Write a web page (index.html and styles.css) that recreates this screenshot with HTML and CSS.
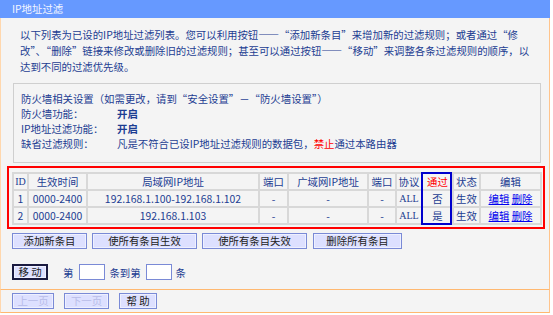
FILE: index.html
```html
<!DOCTYPE html>
<html lang="zh-CN">
<head>
    <meta charset="UTF-8">
    <title>IP地址过滤</title>
    <link rel="stylesheet" href="styles.css">
</head>
<body>

<div class="panel">
    <div class="title">IP地址过滤</div>

    <div class="content">
        <p class="intro">
            以下列表为已设的IP地址过滤列表。您可以利用按钮——“添加新条目”来增加新的过滤规则；或者通过“修<br>
            改”、“删除”链接来修改或删除旧的过滤规则；甚至可以通过按钮——“移动”来调整各条过滤规则的顺序，以<br>
            达到不同的过滤优先级。
        </p>

        <div class="setbox">
            <div>防火墙相关设置（如需更改，请到“安全设置”－“防火墙设置”）</div>
            <div><span class="key">防火墙功能：</span><b>开启</b></div>
            <div><span class="key">IP地址过滤功能：</span><b>开启</b></div>
            <div><span class="key">缺省过滤规则：</span>凡是不符合已设IP地址过滤规则的数据包，<span class="red">禁止</span>通过本路由器</div>
        </div>

        <div class="redbox">
            <div class="tablewrap">
                <table class="list">
                    <colgroup>
                        <col class="c-id">
                        <col class="c-time">
                        <col class="c-lan">
                        <col class="c-port">
                        <col class="c-wan">
                        <col class="c-port2">
                        <col class="c-proto">
                        <col class="c-pass">
                        <col class="c-state">
                        <col class="c-edit">
                    </colgroup>
                    <tr>
                        <th class="serif">ID</th>
                        <th>生效时间</th>
                        <th>局域网IP地址</th>
                        <th>端口</th>
                        <th>广域网IP地址</th>
                        <th>端口</th>
                        <th>协议</th>
                        <th class="red">通过</th>
                        <th>状态</th>
                        <th>编辑</th>
                    </tr>
                    <tr>
                        <td>1</td>
                        <td>0000-2400</td>
                        <td>192.168.1.100-192.168.1.102</td>
                        <td>-</td>
                        <td>-</td>
                        <td>-</td>
                        <td class="serif">ALL</td>
                        <td>否</td>
                        <td>生效</td>
                        <td><a href="javascript:;">编辑</a> <a href="javascript:;">删除</a></td>
                    </tr>
                    <tr>
                        <td>2</td>
                        <td>0000-2400</td>
                        <td>192.168.1.103</td>
                        <td>-</td>
                        <td>-</td>
                        <td>-</td>
                        <td class="serif">ALL</td>
                        <td>是</td>
                        <td>生效</td>
                        <td><a href="javascript:;">编辑</a> <a href="javascript:;">删除</a></td>
                    </tr>
                </table>
                <!--蓝框标出“通过”一列-->
                <div class="passmark"></div>
            </div>
        </div>

        <div class="btnrow">
            <button class="btn w75">添加新条目</button>
            <button class="btn w105">使所有条目生效</button>
            <button class="btn w105">使所有条目失效</button>
            <button class="btn w89">删除所有条目</button>
        </div>

        <div class="moverow">
            <button class="btn move">移 动</button>
            <span class="lbl first">第</span>
            <span class="inp"></span>
            <span class="lbl">条到第</span>
            <span class="inp"></span>
            <span class="lbl">条</span>
        </div>
    </div>

    <div class="foot">
        <button class="btn dis w42">上一页</button>
        <button class="btn dis w45">下一页</button>
        <button class="btn help">帮 助</button>
    </div>
</div>

</body>
</html>
```

FILE: styles.css
```css
*{
    margin: 0;
    padding: 0;
}

body{
    background-color: #ffffff;
    font-family: "Noto Sans CJK SC", "Liberation Sans", sans-serif;
    font-size: 10.4px;
    color: #1c3d92;
}

.panel{
    width: 550px;
}

.title{
    height: 18px;
    line-height: 18px;
    background-color: #6699ff;
    color: #f4f6ff;
    padding-left: 12px;
}

.content{
    background-color: #f4f4f4;
    border-left: 1px solid #ffd7ad;
    border-right: 1px solid #ffc48c;
    border-bottom: 1px solid #ffb870;
    padding-top: 9px;
    padding-bottom: 9px;
}

.intro{
    line-height: 16px;
    padding-left: 19px;
    white-space: nowrap;
}

/*防火墙设置框*/
.setbox{
    margin: 8px 0 0 12px;
    width: 509px;
    border: 1px solid #cfcfcf;
    padding: 7px 10px 11px 7px;
    line-height: 15px;
}

.key{
    display: inline-block;
    width: 96px;
}

.red{
    color: #ff0000;
}

/*红框*/
.redbox{
    margin: 3px 0 0 6px;
    width: 528px;
    border: 2px solid #ff0000;
    padding: 4px 3px 2px 3px;
}

.tablewrap{
    position: relative;
    width: 528px;
}

.list{
    width: 528px;
    border-collapse: collapse;
    table-layout: fixed;
}

.list th, .list td{
    border: 2px solid #d8d8d8;
    padding: 0;
    height: 15px;
    line-height: 15px;
    text-align: center;
    font-weight: normal;
    white-space: nowrap;
    overflow: hidden;
}

.c-id{ width: 15px; }
.c-time{ width: 59px; }
.c-lan{ width: 172px; }
.c-port{ width: 29px; }
.c-wan{ width: 80px; }
.c-port2{ width: 28px; }
.c-proto{ width: 26px; }
.c-pass{ width: 31px; }
.c-state{ width: 27px; }
.c-edit{ width: 61px; }

.list a{
    color: #0000ee;
}

.serif{
    font-family: "Liberation Serif", serif;
    font-size: 10px;
}

.passmark{
    position: absolute;
    left: 409px;
    top: 0;
    width: 27px;
    height: 49px;
    border: 2px solid #0000cc;
}

/*按钮*/
.btn{
    height: 16px;
    line-height: 12px;
    font-family: "Noto Sans CJK SC", "Liberation Sans", sans-serif;
    font-size: 10.4px;
    color: #222222;
    background-color: #dde0ff;
    border: 1px solid #7a8ad6;
    box-shadow: inset 0 0 0 1px #eef0ff;
}

.w75{ width: 75px; }
.w105{ width: 105px; }
.w89{ width: 89px; }
.w42{ width: 42px; }
.w45{ width: 45px; }

.btnrow{
    margin: 4px 0 0 11px;
    display: flex;
    gap: 5px;
}

.btnrow .w89{
    margin-left: 1px;
}

.moverow{
    margin: 15px 0 0 11px;
    display: flex;
    align-items: center;
    height: 16px;
}

.move{
    width: 36px;
    border: 2px solid #1a1a40;
    line-height: 10px;
    margin-right: 15px;
}

.lbl{
    margin-right: 5px;
}

.lbl.first{
    margin-right: 6px;
}

.inp{
    display: inline-block;
    width: 24px;
    height: 14px;
    background-color: #ffffff;
    border: 1px solid #7a8ad6;
    margin-right: 4px;
}

.foot{
    background-color: #f4f4f4;
    border-left: 1px solid #ffd7ad;
    border-right: 1px solid #ffc48c;
    border-bottom: 1px solid #ffb870;
    padding: 3px 0 3px 11px;
    display: flex;
    gap: 10px;
}

.dis{
    color: #b8bce8;
}

.help{
    width: 38px;
}
```
